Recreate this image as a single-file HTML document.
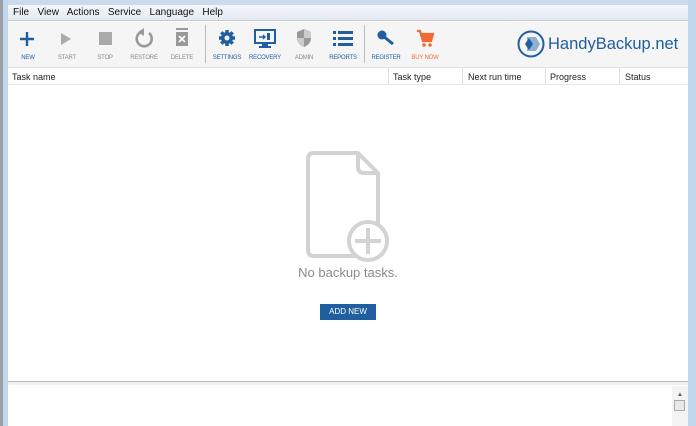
<!DOCTYPE html>
<html><head><meta charset="utf-8"><style>
*{margin:0;padding:0;box-sizing:border-box}
body{width:696px;height:426px;position:relative;overflow:hidden;background:#fff;font-family:"Liberation Sans",sans-serif}
.a{position:absolute}
.lbl{position:absolute;top:55px;font-size:6px;color:#888;text-align:center;width:50px;letter-spacing:-0.2px}
.blue{color:#1f5fa0}
.hd{position:absolute;top:72px;font-size:9px;color:#222}
.sep{position:absolute;top:67px;width:1px;height:17px;background:#e2e2e2}
</style></head><body>
<div class="a" style="left:0;top:0;width:696px;height:5px;background:#c9dbec"></div>
<div class="a" style="left:0;top:0;width:3px;height:426px;background:#9aa0a6"></div>
<div class="a" style="left:3px;top:0;width:5px;height:426px;background:#c3d7ea"></div>
<div class="a" style="left:688px;top:0;width:8px;height:426px;background:#c3d7ea"></div>
<div class="a" style="left:8px;top:5px;width:680px;height:16px;background:linear-gradient(#f4f6fa,#e4e9f2);border-bottom:1px solid #c8c8c8"></div>
<div class="a" style="left:13px;top:7px;font-size:10px;color:#111">File&nbsp;&nbsp; View&nbsp;&nbsp; Actions&nbsp;&nbsp; Service&nbsp;&nbsp; Language&nbsp;&nbsp; Help</div>
<div class="a" style="left:8px;top:22px;width:680px;height:45px;background:#f5f5f5"></div>
<div class="a" style="left:205px;top:25px;width:1px;height:38px;background:#bbb"></div>
<div class="a" style="left:364px;top:25px;width:1px;height:38px;background:#bbb"></div>
<svg class="a" style="left:19px;top:31px" width="16" height="16"><path d="M8 1v14M1 8h14" stroke="#1f5fa0" stroke-width="2.4"/></svg>
<div class="lbl blue" style="left:3px">NEW</div>
<svg class="a" style="left:60px;top:32px" width="12" height="14"><path d="M1 1L11 7L1 13Z" fill="#aaa"/></svg>
<div class="lbl" style="left:42px">START</div>
<div class="a" style="left:99px;top:32px;width:13px;height:13px;background:#aaa"></div>
<div class="lbl" style="left:80px">STOP</div>
<svg class="a" style="left:134px;top:27px" width="20" height="22"><path d="M7 5 A7.5 7.5 0 1 0 15 6" fill="none" stroke="#999" stroke-width="2.6"/><path d="M4 5L10 1V9Z" fill="#999"/></svg>
<div class="lbl" style="left:119px">RESTORE</div>
<svg class="a" style="left:175px;top:28px" width="14" height="18"><rect x="1" y="0" width="12" height="2" fill="#999"/><rect x="1" y="4" width="12" height="14" fill="#999"/><path d="M4 8l6 6M10 8l-6 6" stroke="#fff" stroke-width="1.6"/></svg>
<div class="lbl" style="left:157px">DELETE</div>
<svg class="a" style="left:218px;top:29px" width="18" height="18" viewBox="0 0 18 18"><g fill="#1f5fa0"><circle cx="9" cy="9" r="6"/><g stroke="#1f5fa0" stroke-width="3.4"><path d="M9 1v16M1 9h16M3.3 3.3l11.4 11.4M14.7 3.3L3.3 14.7"/></g></g><circle cx="9" cy="9" r="2.5" fill="#f5f5f5"/></svg>
<div class="lbl blue" style="left:202px">SETTINGS</div>
<svg class="a" style="left:254px;top:29px" width="22" height="20"><rect x="1" y="1" width="20" height="13" fill="none" stroke="#1f5fa0" stroke-width="2"/><rect x="8" y="14" width="6" height="3" fill="#1f5fa0"/><rect x="5" y="17" width="12" height="2" fill="#1f5fa0"/><path d="M5 8h6M9 6l2 2-2 2" stroke="#1f5fa0" stroke-width="1.4" fill="none"/><rect x="13" y="4" width="3" height="7" fill="#1f5fa0"/></svg>
<div class="lbl blue" style="left:240px">RECOVERY</div>
<svg class="a" style="left:296px;top:28px" width="16" height="20"><path d="M8 1L15 4V10C15 15 11 18 8 19C5 18 1 15 1 10V4Z" fill="#999"/><path d="M8 1L15 4V10H8Z" fill="#ccc"/><path d="M1 10H8V19C5 18 1 15 1 10Z" fill="#ccc"/></svg>
<div class="lbl" style="left:279px">ADMIN</div>
<svg class="a" style="left:333px;top:31px" width="20" height="16"><g fill="#1f5fa0"><rect x="0" y="0" width="3" height="3"/><rect x="5" y="0" width="15" height="3"/><rect x="0" y="6" width="3" height="3"/><rect x="5" y="6" width="15" height="3"/><rect x="0" y="12" width="3" height="3"/><rect x="5" y="12" width="15" height="3"/></g></svg>
<div class="lbl blue" style="left:318px">REPORTS</div>
<svg class="a" style="left:377px;top:30px" width="18" height="16"><circle cx="5" cy="5" r="4.5" fill="#1f5fa0"/><path d="M6 6L16 14" stroke="#1f5fa0" stroke-width="3"/></svg>
<div class="lbl blue" style="left:361px">REGISTER</div>
<svg class="a" style="left:416px;top:29px" width="18" height="18"><path d="M1 2h3l3 10h8l2-7H5" fill="none" stroke="#f06a35" stroke-width="2.2"/><rect x="6" y="5" width="10" height="6" fill="#f06a35"/><circle cx="8" cy="16" r="1.8" fill="#f06a35"/><circle cx="14" cy="16" r="1.8" fill="#f06a35"/></svg>
<div class="lbl" style="left:400px;color:#f06a35">BUY NOW</div>
<svg class="a" style="left:517px;top:30px" width="30" height="30"><circle cx="14" cy="14" r="12.5" fill="none" stroke="#1f5fa0" stroke-width="2"/><path d="M10 7h9l4 7-4 7h-9z" fill="#8fb0d3"/><path d="M12 8L16 14L12 20L8 14Z" fill="#1f5fa0"/></svg>
<div class="a" style="left:548px;top:35px;font-size:16.5px;color:#1f5fa0">HandyBackup.net</div>
<div class="a" style="left:8px;top:67px;width:680px;height:18px;background:#fff;border-top:1px solid #e0e0e0;border-bottom:1px solid #e8e8e8"></div>
<div class="hd" style="left:12px">Task name</div>
<div class="sep" style="left:388px"></div><div class="hd" style="left:393px">Task type</div>
<div class="sep" style="left:462px"></div><div class="hd" style="left:468px">Next run time</div>
<div class="sep" style="left:545px"></div><div class="hd" style="left:550px">Progress</div>
<div class="sep" style="left:619px"></div><div class="hd" style="left:625px">Status</div>
<svg class="a" style="left:303px;top:148px" width="92" height="116"><path d="M75 82V25L55 5H11Q5 5 5 11V102Q5 108 11 108H57" fill="none" stroke="#d3d3d3" stroke-width="4" stroke-linejoin="round"/><path d="M55 5V19Q55 25 61 25H75" fill="none" stroke="#d3d3d3" stroke-width="4"/><circle cx="65" cy="93" r="19" fill="#fff" stroke="#d3d3d3" stroke-width="4"/><path d="M65 80V106M52 93H78" stroke="#d3d3d3" stroke-width="4"/></svg>
<div class="a" style="left:248px;top:265px;width:200px;text-align:center;font-size:13px;color:#8a8a8a">No backup tasks.</div>
<div class="a" style="left:320px;top:304px;width:56px;height:16px;background:#1f5fa0;color:#fff;font-size:8px;text-align:center;line-height:16px">ADD NEW</div>
<div class="a" style="left:8px;top:381px;width:680px;height:4px;background:#f0f0f0;border-top:1px solid #bdbdbd"></div>
<div class="a" style="left:672px;top:386px;width:16px;height:40px;background:#f3f3f3"></div>
<div class="a" style="left:677px;top:392px;font-size:6px;color:#555">▲</div>
<div class="a" style="left:674px;top:400px;width:11px;height:11px;border:1px solid #aaa;background:#e8e8e8"></div>
</body></html>
